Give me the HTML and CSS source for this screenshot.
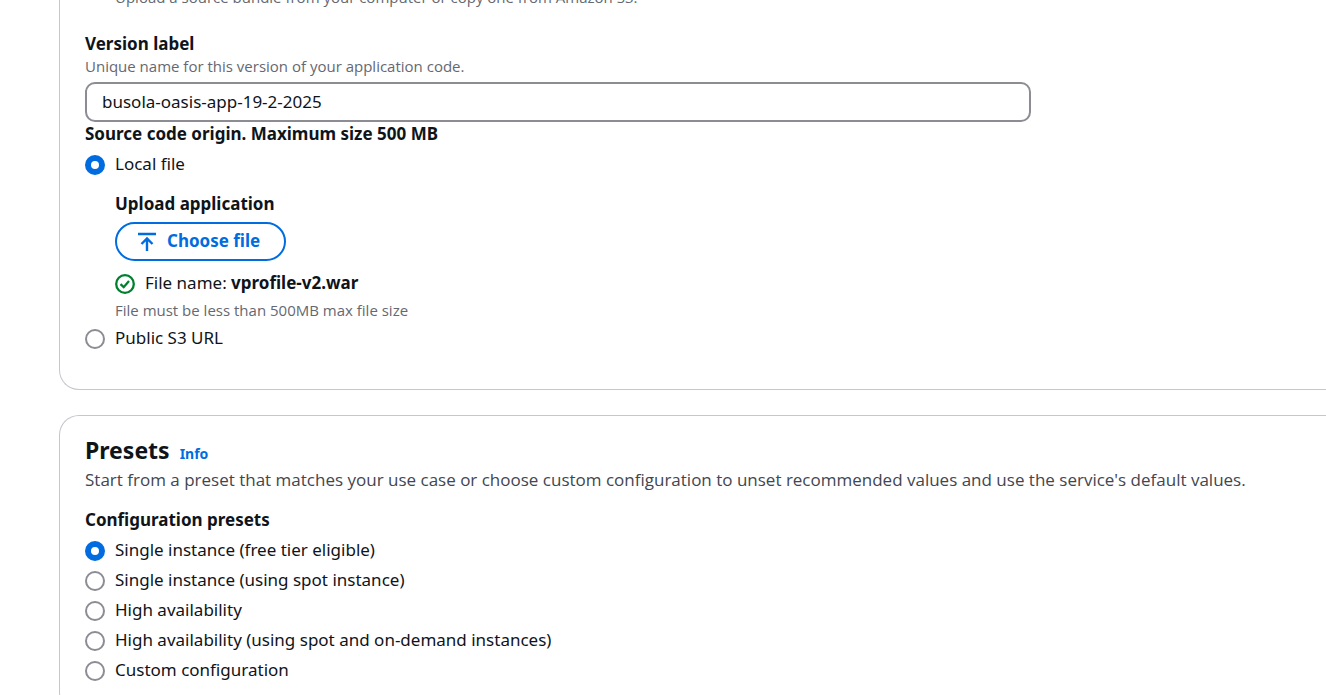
FILE: index.html
```html
<!DOCTYPE html>
<html lang="en">
<head>
<meta charset="utf-8">
<title>Configure environment</title>
<link rel="stylesheet" href="styles.css">
</head>
<body>
<main class="page">
  <section class="card card-code">
    <p class="hint indent">Upload a source bundle from your computer or copy one from Amazon S3.</p>
    <div class="field">
      <label class="label" for="version">Version label</label>
      <p class="hint" id="version-hint">Unique name for this version of your application code.</p>
      <input class="text-input" id="version" type="text" value="busola-oasis-app-19-2-2025" aria-describedby="version-hint">
    </div>
    <fieldset class="group group-origin">
      <legend class="label">Source code origin. Maximum size 500 MB</legend>
      <label class="option"><input class="radio" type="radio" name="origin" checked>Local file</label>
      <div class="upload indent">
        <h3 class="label">Upload application</h3>
        <button class="button" type="button">
          <svg class="icon" viewBox="0 0 20 20" aria-hidden="true"><path d="M1 2h18M10 19V7M4.500 12 10 6.500l5.500 5.500"/></svg>
          Choose file
        </button>
        <p class="status">
          <svg class="status-icon" viewBox="0 0 20 20" aria-hidden="true"><circle cx="10" cy="10" r="8.800"/><path d="M5.500 10.200 8.700 13.200 14 7"/></svg>
          <span>File name: <strong>vprofile-v2.war</strong></span>
        </p>
        <p class="hint">File must be less than 500MB max file size</p>
      </div>
      <label class="option"><input class="radio" type="radio" name="origin">Public S3 URL</label>
    </fieldset>
  </section>
  <section class="card">
    <header class="card-header">
      <h2 class="title">Presets</h2>
      <a class="info" href="#">Info</a>
    </header>
    <p class="description">Start from a preset that matches your use case or choose custom configuration to unset recommended values and use the service's default values.</p>
    <fieldset class="group group-presets">
      <legend class="label">Configuration presets</legend>
      <label class="option"><input class="radio" type="radio" name="preset" checked>Single instance (free tier eligible)</label>
      <label class="option"><input class="radio" type="radio" name="preset">Single instance (using spot instance)</label>
      <label class="option"><input class="radio" type="radio" name="preset">High availability</label>
      <label class="option"><input class="radio" type="radio" name="preset">High availability (using spot and on-demand instances)</label>
      <label class="option"><input class="radio" type="radio" name="preset">Custom configuration</label>
    </fieldset>
  </section>
</main>
</body>
</html>
```
FILE: styles.css
```css
* { box-sizing: border-box; }
html { overflow: hidden; }
body {
  margin: 0;
  background: #fff;
  color: #0f141a;
  font: 17px/25px "Noto Sans", "Open Sans", sans-serif;
}
h2, h3, p { margin: 0; }
.page {
  display: flex;
  flex-direction: column;
  gap: 25px;
  padding-left: 59px;
}
.card {
  padding: 19px 59px 30px 25px;
  border: 1px solid #c6c6cd;
  border-right: 0;
  border-radius: 20px 0 0 20px;
}
.card-code {
  margin-top: -13px;
  padding-top: 0;
  padding-bottom: 39px;
  border-top: 0;
  border-top-left-radius: 0;
}
.indent { margin-left: 30px; }
.hint,
.description { font-family: "Open Sans", "Noto Sans", sans-serif; }
.hint {
  color: #656871;
  font-size: 15px;
  line-height: 20px;
}
.label {
  display: block;
  padding: 0;
  font-size: 17px;
  font-weight: 700;
  line-height: 25px;
}
.field { margin-top: 24px; }
.text-input {
  display: block;
  width: 80%;
  height: 40px;
  margin-top: 6px;
  padding: 0 15px 2px;
  border: 2px solid #8c8c94;
  border-radius: 10px;
  background: #fff;
  color: inherit;
  font: inherit;
}
.group {
  min-width: 0;
  margin: 0;
  padding: 0;
  border: 0;
}
.group-origin { margin-top: -1px; }
.option {
  display: flex;
  align-items: center;
  gap: 10px;
  margin-top: 5px;
}
.radio {
  flex: none;
  width: 20px;
  height: 20px;
  margin: 2px 0 0;
  border: 2px solid #8c8c94;
  border-radius: 50%;
  background: #fff;
  appearance: none;
}
.radio:checked { border: 6px solid #006ce0; }
.upload { margin-top: 15px; }
.button {
  display: flex;
  align-items: center;
  gap: 10px;
  height: 39px;
  margin: 6px 0 9px;
  padding: 0 24px 2px 20px;
  border: 2px solid #006ce0;
  border-radius: 20px;
  background: #fff;
  color: #006ce0;
  font: inherit;
  font-weight: 700;
}
.icon {
  width: 20px;
  height: 20px;
  margin-top: 2px;
  fill: none;
  stroke: currentColor;
  stroke-width: 2.400;
}
.status {
  display: flex;
  align-items: center;
  gap: 10px;
  margin-bottom: 5px;
}
.status-icon {
  width: 20px;
  height: 20px;
  margin-top: 2px;
  fill: none;
  stroke: #00802f;
  stroke-width: 2.300;
}
.card-header {
  display: flex;
  align-items: baseline;
  gap: 10px;
}
.title {
  font-size: 23px;
  line-height: 30px;
}
.info {
  color: #006ce0;
  font-size: 14px;
  font-weight: 700;
  line-height: 20px;
  text-decoration: none;
}
.description {
  margin-top: 2px;
  margin-right: -50px;
  color: #424650;
}
.group-presets { margin-top: 15px; }
```
